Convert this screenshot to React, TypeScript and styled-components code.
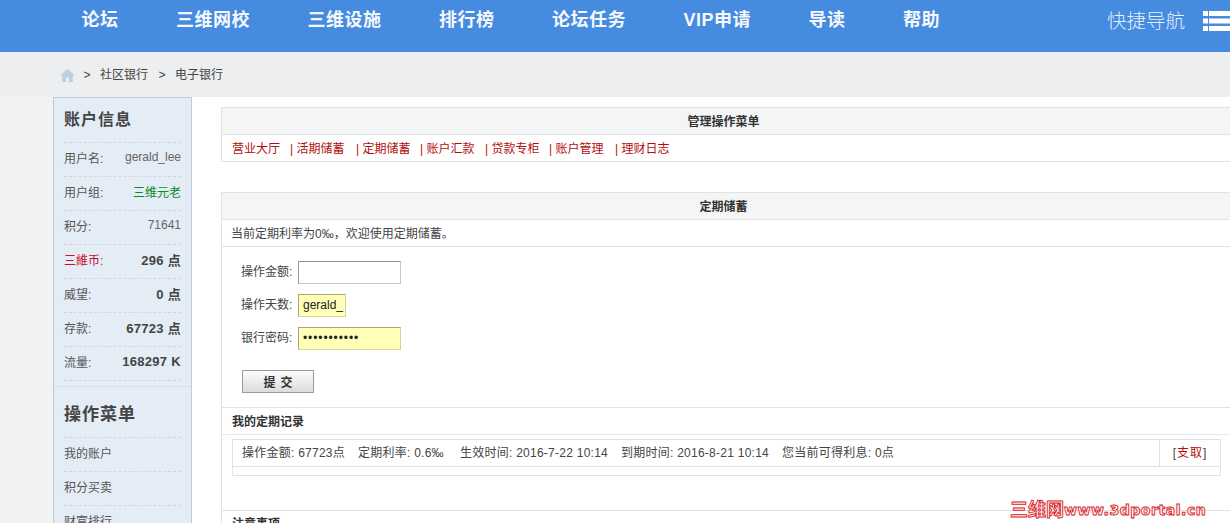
import React from "react";
import styled, { createGlobalStyle } from "styled-components";

const Global = createGlobalStyle`
  html, body { margin: 0; padding: 0; height: 523px; overflow: hidden; background: #fff; }
  body { font-family: "Liberation Sans", "Noto Sans CJK SC", sans-serif; font-size: 12px; color: #444; }
  * { box-sizing: border-box; }
`;

const Page = styled.div`width: 1230px; height: 523px; overflow: hidden; position: relative;`;
const Header = styled.header`height: 52px; background: #458bdf; display: flex; align-items: flex-start; padding-left: 81.5px; color: #fff;`;
const Nav = styled.nav`display: flex; gap: 57.5px; height: 41px; align-items: center;`;
const NavItem = styled.a`font-size: 18px; font-weight: 700; letter-spacing: 0.5px; line-height: 41px; white-space: nowrap; opacity: .95;`;
const Quick = styled.div`margin-left: auto; display: flex; align-items: center; gap: 18px; height: 42px;`;
const QuickText = styled.span`font-size: 19.5px; font-weight: 300; line-height: 42px; white-space: nowrap; color: #e6effb;`;
const Crumbs = styled.div`height: 45px; background: #eceeef; display: flex; align-items: center; padding: 1px 0 0 60px; color: #444;`;
const Crumb = styled.span`white-space: nowrap; line-height: 44px;`;
const Sep = styled.span<{ $l: number; $r: number }>`width: 10px; margin: 0 ${(p) => p.$r}px 0 ${(p) => p.$l}px; font-size: 12px; text-align: center;`;
const Main = styled.div`display: flex; height: 426px; background: #fff;`;
const Gutter = styled.div`width: 53px; background: #f1f2f3;`;
const Side = styled.aside`width: 139px; height: 426px; background: #e4ecf5; border: 1px solid #c0cbd6; border-bottom: 0; border-top-color: #c3ccd6; overflow: hidden; flex: none;`;
const SideTitle = styled.h3`margin: 0; height: 44px; padding: 1px 10px 0; font-size: 16px; line-height: 42px; font-weight: 700; letter-spacing: 1px; color: #444;`;
const MenuTitle = styled(SideTitle)`height: 50px; line-height: 54px; font-size: 17px;`;
const Row = styled.div`height: 34px; margin: 0 10px; padding-bottom: 5px; border-top: 1px dashed #cfd6de; display: flex; justify-content: space-between; align-items: center; white-space: nowrap;`;
const RowEnd = styled.div`height: 6px; margin: 0 10px; border-top: 1px dashed #cfd6de;`;
const RowLabel = styled.span<{ $red?: boolean }>`color: ${(p) => (p.$red ? "#c8102e" : "#555")};`;
const RowValue = styled.span<{ $bold?: boolean; $green?: boolean }>`
  font-weight: ${(p) => (p.$bold ? 700 : 400)};
  font-size: ${(p) => (p.$bold ? "13px" : "12px")};
  letter-spacing: ${(p) => (p.$bold ? "0.3px" : "0")};
  color: ${(p) => (p.$green ? "#0a8a1f" : p.$bold ? "#444" : "#666")};
`;
const SideBlock = styled.div`border-top: 1px solid #d5dde6;`;
const Content = styled.main`flex: 1; padding: 10px 0 0 29px; min-width: 0;`;
const Panel = styled.section`border: 1px solid #e0e2e3; border-right: 0; margin-bottom: 30px;`;
const PanelHead = styled.div`height: 27px; background: #f4f5f5; border-bottom: 1px solid #e0e2e3; text-align: center; font-weight: 700; line-height: 28px; color: #333; padding-right: 5px;`;
const LinkRow = styled.div`height: 26px; padding: 0 0 2px 10px; display: flex; align-items: center; color: #a00; white-space: nowrap;`;
const MenuLink = styled.a<{ $w: number }>`color: #b40d0d; width: ${(p) => p.$w}px; flex: none;`;
const Notice = styled.div`height: 27px; padding-left: 9px; line-height: 28px; border-bottom: 1px solid #e0e2e3; color: #444;`;
const Form = styled.form`height: 161px; padding: 14px 0 0 19px; border-bottom: 1px solid #e0e2e3;`;
const Field = styled.div`display: flex; align-items: center; height: 23px; margin-bottom: 10px;`;
const Label = styled.label`width: 57px; color: #444; white-space: nowrap; line-height: 22px; height: 23px;`;
const Input = styled.div<{ $w: number; $fill?: boolean; $secret?: boolean }>`
  width: ${(p) => p.$w}px; height: 23px; padding: 0 4px; line-height: 21px;
  border: 1px solid ${(p) => (p.$fill ? "#d9d49a" : "#c6c6c6")}; border-top-color: ${(p) => (p.$fill ? "#a8a67a" : "#8f8f8f")};
  border-left-color: ${(p) => (p.$fill ? "#a8a67a" : "#9a9a9a")};
  background: ${(p) => (p.$fill ? "#ffffb8" : "#fff")}; color: #222; overflow: hidden; white-space: nowrap;
  letter-spacing: ${(p) => (p.$secret ? "0.9px" : "0")};
`;
const Button = styled.button`
  display: block; width: 72px; height: 23px; margin: 20px 0 0 1px; padding: 0; border: 1px solid #9b9b9b;
  background: linear-gradient(#fdfdfd, #dcdcdc); font: 700 12px "Liberation Sans", "Noto Sans CJK SC", sans-serif; color: #333; letter-spacing: 5px; text-indent: 5px;
`;
const SubHead = styled.div`height: 27px; padding-left: 10px; line-height: 28px; font-weight: 700; border-bottom: 1px solid #e9eaea; color: #333;`;
const TableWrap = styled.div`padding: 4px 9px 34px 10px;`;
const Table = styled.div`border: 1px solid #e0e2e3; height: 37px;`;
const TableRow = styled.div`height: 27px; border-bottom: 1px solid #e0e2e3; display: flex;`;
const Cell = styled.div`flex: 1; padding-left: 9px; line-height: 27px; white-space: nowrap; display: flex;`;
const Stat = styled.span<{ $w: number }>`width: ${(p) => p.$w}px; flex: none; letter-spacing: 0.25px;`;
const Action = styled.div`width: 61px; border-left: 1px solid #e0e2e3; text-align: center; line-height: 27px; color: #444; letter-spacing: 1px;`;
const ActionLink = styled.a`color: #b40d0d;`;
const NextHead = styled.div`border-top: 1px solid #e0e2e3; padding: 4px 0 0 10px; font-weight: 700; line-height: 18px; color: #333;`;
const Watermark = styled.div`
  position: absolute; left: 1010px; top: 500px; width: 205px; display: flex; align-items: center; height: 20px;
  font: 700 14px/20px "DejaVu Sans", "Noto Sans CJK SC", sans-serif; letter-spacing: 0.55px;
  color: #fff; -webkit-text-stroke: 0.9px #d8262c; text-shadow: 0 0 2px #f7b4b6; white-space: nowrap;
`;
const WatermarkCjk = styled.span`font-size: 18px; letter-spacing: 0;`;

const navItems = ["论坛", "三维网校", "三维设施", "排行榜", "论坛任务", "VIP申请", "导读", "帮助"];
const menuAll: [string, number][] = [["营业大厅", 58], ["| 活期储蓄", 66], ["| 定期储蓄", 64], ["| 账户汇款", 65], ["| 贷款专柜", 64], ["| 账户管理", 66], ["| 理财日志", 70]];

const ListIcon = () => (
  <svg width="27" height="20" viewBox="0 0 27 20" fill="#fff" style={{ flex: "none" }}>
    <rect x="0" y="0" width="5" height="5" />
    <rect x="0" y="7.5" width="5" height="5" />
    <rect x="0" y="15" width="5" height="5" />
    <rect x="6" y="0" width="21" height="5" />
    <rect x="6" y="7.5" width="21" height="5" />
    <rect x="6" y="15" width="21" height="5" />
  </svg>
);

const HomeIcon = () => (
  <svg width="15" height="13" viewBox="0 0 15 13" fill="#bdd0e0" style={{ flex: "none" }}>
    <path d="M7.5 0 15 6.5h-2.2V13H9V8.5H6V13H2.2V6.5H0z" />
  </svg>
);

export default function App() {
  return (
    <Page>
      <Global />
      <Header>
        <Nav>{navItems.map((n) => <NavItem key={n}>{n}</NavItem>)}</Nav>
        <Quick><QuickText>快捷导航</QuickText><ListIcon /></Quick>
      </Header>
      <Crumbs>
        <HomeIcon /><Sep $l={7} $r={8}>&gt;</Sep><Crumb>社区银行</Crumb><Sep $l={9} $r={8}>&gt;</Sep><Crumb>电子银行</Crumb>
      </Crumbs>
      <Main>
        <Gutter />
        <Side>
          <SideTitle>账户信息</SideTitle>
          <Row><RowLabel>用户名:</RowLabel><RowValue>gerald_lee</RowValue></Row>
          <Row><RowLabel>用户组:</RowLabel><RowValue $green>三维元老</RowValue></Row>
          <Row><RowLabel>积分:</RowLabel><RowValue>71641</RowValue></Row>
          <Row><RowLabel $red>三維币:</RowLabel><RowValue $bold>296 点</RowValue></Row>
          <Row><RowLabel>威望:</RowLabel><RowValue $bold>0 点</RowValue></Row>
          <Row><RowLabel>存款:</RowLabel><RowValue $bold>67723 点</RowValue></Row>
          <Row><RowLabel>流量:</RowLabel><RowValue $bold>168297 K</RowValue></Row>
          <RowEnd />
          <SideBlock>
            <MenuTitle>操作菜单</MenuTitle>
            <Row><RowLabel>我的账户</RowLabel></Row>
            <Row><RowLabel>积分买卖</RowLabel></Row>
            <Row><RowLabel>财富排行</RowLabel></Row>
          </SideBlock>
        </Side>
        <Content>
          <Panel>
            <PanelHead>管理操作菜单</PanelHead>
            <LinkRow>{menuAll.map(([t, w]) => <MenuLink key={t} $w={w}>{t}</MenuLink>)}</LinkRow>
          </Panel>
          <Panel>
            <PanelHead>定期储蓄</PanelHead>
            <Notice>当前定期利率为0‰，欢迎使用定期储蓄。</Notice>
            <Form>
              <Field><Label>操作金额:</Label><Input $w={103} /></Field>
              <Field><Label>操作天数:</Label><Input $w={48} $fill>gerald_</Input></Field>
              <Field><Label>银行密码:</Label><Input $w={103} $fill $secret>•••••••••••</Input></Field>
              <Button type="button">提交</Button>
            </Form>
            <SubHead>我的定期记录</SubHead>
            <TableWrap>
              <Table>
                <TableRow>
                  <Cell>
                    <Stat $w={116}>操作金额: 67723点</Stat>
                    <Stat $w={102}>定期利率: 0.6‰</Stat>
                    <Stat $w={161}>生效时间: 2016-7-22 10:14</Stat>
                    <Stat $w={161}>到期时间: 2016-8-21 10:14</Stat>
                    <Stat $w={140}>您当前可得利息: 0点</Stat>
                  </Cell>
                  <Action>[<ActionLink>支取</ActionLink>]</Action>
                </TableRow>
              </Table>
            </TableWrap>
            <NextHead>注意事项</NextHead>
          </Panel>
        </Content>
      </Main>
      <Watermark><WatermarkCjk>三维网</WatermarkCjk>www.3dportal.cn</Watermark>
    </Page>
  );
}
